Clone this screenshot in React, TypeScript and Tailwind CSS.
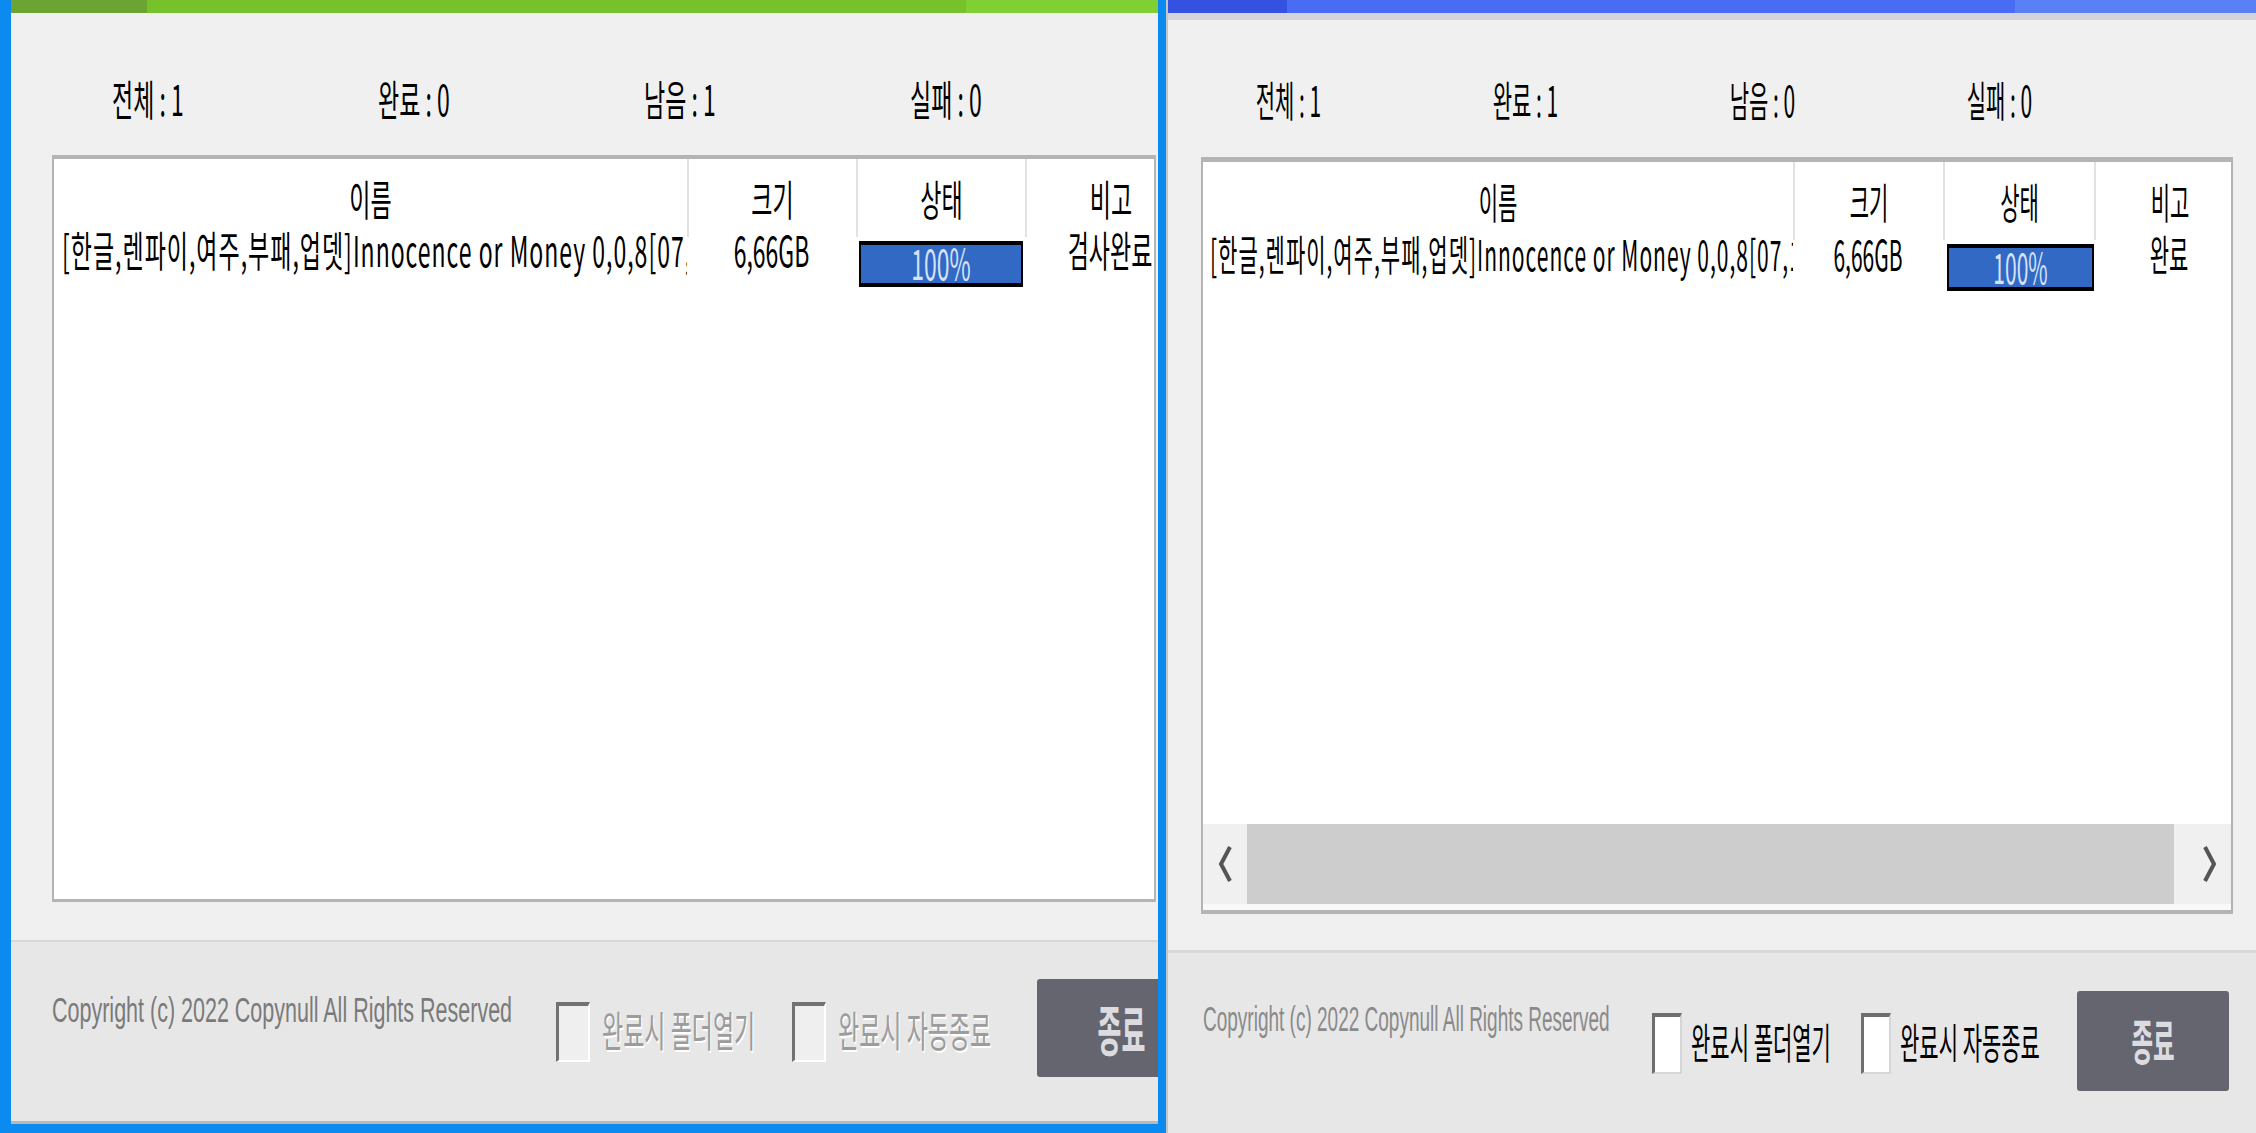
import React from "react";

const NAME = "[한글,렌파이,여주,부패,업뎃]Innocence or Money 0,0,8[07,18],";

function ArrowL() {
  return (
    <svg width="16" height="36" viewBox="0 0 16 36">
      <polyline points="13,1 4,18 13,35" fill="none" stroke="#555555" strokeWidth="4" />
    </svg>
  );
}
function ArrowR() {
  return (
    <svg width="16" height="36" viewBox="0 0 16 36">
      <polyline points="3,1 12,18 3,35" fill="none" stroke="#555555" strokeWidth="4" />
    </svg>
  );
}

function LeftWindow() {
  const t = "inline-block whitespace-pre leading-none text-[23px] scale-y-[1.85]";
  return (
    <div className="flex h-full w-[1166px] shrink-0 flex-col bg-[#0b8bef] pb-[9px] pl-[11px] pr-[8px]">
      <div className="flex h-full w-full flex-col overflow-hidden border-b-[3px] border-[#b9b9b9]">
        <div className="flex h-[13px] shrink-0">
          <div className="w-[136px] bg-[#6ba432]" />
          <div className="flex-1 bg-[#77c12b]" />
          <div className="w-[192px] bg-[#80cf33]" />
        </div>
        <div className="flex h-[927px] shrink-0 flex-col overflow-hidden bg-[#f0f0f0]">
          <div className="mt-[57px] flex h-[60px] shrink-0 items-center pl-[4px]">
            {["전체 : 1", "완료 : 0", "남음 : 1", "실패 : 0"].map((s) => (
              <div key={s} className="w-[266px] text-center">
                <span className={t}>{s}</span>
              </div>
            ))}
          </div>
          <div className="ml-[41px] mt-[25px] flex h-[747px] w-[1104px] shrink-0 flex-col overflow-hidden border-b-[3px] border-l-2 border-r-2 border-t-4 border-[#b4b4b4] bg-white">
            <div className="flex h-[78px] shrink-0">
              <div className="flex w-[633px] shrink-0 items-center justify-center"><span className={t}>이름</span></div>
              <div className="flex w-[169px] shrink-0 items-center justify-center border-l-2 border-[#e2e2e2]"><span className={t}>크기</span></div>
              <div className="flex w-[169px] shrink-0 items-center justify-center border-l-2 border-[#e2e2e2]"><span className={t}>상태</span></div>
              <div className="flex w-[170px] shrink-0 items-center justify-center border-l-2 border-[#e2e2e2]"><span className={t}>비고</span></div>
            </div>
            <div className="flex shrink-0">
              <div className="flex h-[24px] w-[633px] shrink-0 items-center overflow-x-clip pl-[8px]"><span className={t + " tracking-[1px]"}>{NAME}</span></div>
              <div className="flex h-[24px] w-[169px] shrink-0 items-center justify-center"><span className={t}>6,66GB</span></div>
              <div className="w-[169px] shrink-0">
                <div className="ml-[3px] mt-[4px] flex h-[46px] w-[164px] items-center justify-center border-x-2 border-y-4 border-black bg-[#3269c4]">
                  <span className="-mt-[3px] inline-block scale-y-[1.85] text-[23px] leading-none text-[#d6e2f7]">100%</span>
                </div>
              </div>
              <div className="flex h-[24px] w-[170px] shrink-0 items-center justify-center"><span className={t}>검사완료</span></div>
            </div>
          </div>
        </div>
        <div className="h-[2px] shrink-0 bg-[#d8d8d8]" />
        <div className="flex flex-1 items-center overflow-hidden bg-[#e7e7e7] pl-[41px]">
          <div className="mb-[42px] w-[504px] shrink-0">
            <span className="inline-block scale-y-[1.6] whitespace-nowrap font-['Liberation_Sans',Arial,sans-serif] text-[21.5px] leading-none text-[#7a7a7a]">
              Copyright (c) 2022 Copynull All Rights Reserved
            </span>
          </div>
          <div className="h-[60px] w-[34px] shrink-0 border-b-2 border-l-[3px] border-r-2 border-t-4 border-b-white border-l-[#727272] border-r-white border-t-[#727272] bg-[#efefef]" />
          <div className="w-[202px] shrink-0 pl-[12px]">
            <span className="-mt-[3px] inline-block scale-y-[1.85] whitespace-pre text-[23px] leading-none text-[#9c9c9c] [text-shadow:1px_1px_0_#ffffff]">완료시 폴더열기</span>
          </div>
          <div className="h-[60px] w-[34px] shrink-0 border-b-2 border-l-[3px] border-r-2 border-t-4 border-b-white border-l-[#727272] border-r-white border-t-[#727272] bg-[#efefef]" />
          <div className="w-[211px] shrink-0 pl-[12px]">
            <span className="-mt-[3px] inline-block scale-y-[1.85] whitespace-pre text-[23px] leading-none text-[#9c9c9c] [text-shadow:1px_1px_0_#ffffff]">완료시 자동종료</span>
          </div>
          <div className="mb-[7px] flex h-[98px] w-[169px] shrink-0 items-center justify-center rounded-[3px] bg-[#65656f]">
            <span className="inline-block scale-y-[2.1] text-[26px] font-bold leading-none text-[#dcdce0]">종료</span>
          </div>
        </div>
      </div>
    </div>
  );
}

function RightWindow() {
  const t = "inline-block whitespace-pre leading-none text-[21px] scale-y-[2.0]";
  return (
    <div className="flex h-full w-[1088px] shrink-0 flex-col overflow-hidden">
      <div className="flex h-[13px] shrink-0">
        <div className="w-[119px] bg-[#3551e0]" />
        <div className="flex-1 bg-[#4a6cf5]" />
        <div className="w-[241px] bg-[#5b80f5]" />
      </div>
      <div className="h-[7px] shrink-0 bg-[#d3d4da]" />
      <div className="flex h-[930px] shrink-0 flex-col overflow-hidden bg-[#f0f0f0]">
        <div className="mt-[51px] flex h-[60px] shrink-0 items-center pl-[2px]">
          {["전체 : 1", "완료 : 1", "남음 : 0", "실패 : 0"].map((s) => (
            <div key={s} className="w-[237px] text-center">
              <span className={t}>{s}</span>
            </div>
          ))}
        </div>
        <div className="ml-[33px] mt-[26px] flex h-[757px] w-[1032px] shrink-0 flex-col overflow-hidden border-b-4 border-l-2 border-r-2 border-t-[5px] border-[#b4b4b4] bg-white">
          <div className="flex h-[78px] shrink-0">
            <div className="flex w-[590px] shrink-0 items-center justify-center"><span className={t}>이름</span></div>
            <div className="flex w-[150px] shrink-0 items-center justify-center border-l-2 border-[#e2e2e2]"><span className={t}>크기</span></div>
            <div className="flex w-[151px] shrink-0 items-center justify-center border-l-2 border-[#e2e2e2]"><span className={t}>상태</span></div>
            <div className="flex w-[150px] shrink-0 items-center justify-center border-l-2 border-[#e2e2e2]"><span className={t}>비고</span></div>
          </div>
          <div className="flex shrink-0">
            <div className="flex h-[26px] w-[590px] shrink-0 items-center overflow-x-clip pl-[7px]"><span className={t + " tracking-[1px]"}>{NAME}</span></div>
            <div className="flex h-[26px] w-[150px] shrink-0 items-center justify-center"><span className={t}>6,66GB</span></div>
            <div className="w-[151px] shrink-0">
              <div className="ml-[4px] mt-[4px] flex h-[47px] w-[147px] items-center justify-center border-x-2 border-y-4 border-black bg-[#3269c4]">
                <span className="-mt-[3px] inline-block scale-y-[2.0] text-[21px] leading-none text-[#d6e2f7]">100%</span>
              </div>
            </div>
            <div className="flex h-[26px] w-[150px] shrink-0 items-center justify-center"><span className={t}>완료</span></div>
          </div>
          <div className="flex-1" />
          <div className="flex h-[80px] shrink-0 bg-[#f0f0f0]">
            <div className="flex w-[44px] shrink-0 items-center justify-center"><ArrowL /></div>
            <div className="w-[927px] shrink-0 bg-[#cdcdcd]" />
            <div className="flex flex-1 items-center justify-end pr-[13px]"><ArrowR /></div>
          </div>
          <div className="h-[6px] shrink-0 bg-[#f9f9f9]" />
        </div>
      </div>
      <div className="h-[3px] shrink-0 bg-[#d8d8d8]" />
      <div className="flex flex-1 items-center bg-[#e7e7e7] pl-[35px]">
        <div className="mb-[48px] w-[449px] shrink-0">
          <span className="inline-block scale-y-[1.8] whitespace-nowrap font-['Liberation_Sans',Arial,sans-serif] text-[19px] leading-none text-[#8a8a8a]">
            Copyright (c) 2022 Copynull All Rights Reserved
          </span>
        </div>
        <div className="h-[61px] w-[30px] shrink-0 border-b-2 border-l-[3px] border-r-2 border-t-4 border-b-[#d6d6d6] border-l-[#6e6e6e] border-r-[#d6d6d6] border-t-[#6e6e6e] bg-white" />
        <div className="w-[179px] shrink-0 pl-[9px]">
          <span className={t + " -mt-[3px]"}>완료시 폴더열기</span>
        </div>
        <div className="h-[61px] w-[30px] shrink-0 border-b-2 border-l-[3px] border-r-2 border-t-4 border-b-[#d6d6d6] border-l-[#6e6e6e] border-r-[#d6d6d6] border-t-[#6e6e6e] bg-white" />
        <div className="w-[186px] shrink-0 pl-[9px]">
          <span className={t + " -mt-[3px]"}>완료시 자동종료</span>
        </div>
        <div className="mb-[4px] flex h-[100px] w-[152px] shrink-0 items-center justify-center rounded-[3px] bg-[#65656f]">
          <span className="inline-block scale-y-[2.1] text-[23.5px] font-bold leading-none text-[#dcdce0]">종료</span>
        </div>
      </div>
    </div>
  );
}

export default function App() {
  return (
    <div className="flex h-[1133px] w-[2256px] overflow-hidden bg-[#f0f0f0] font-['Noto_Sans_CJK_KR','Noto_Sans',sans-serif] text-black">
      <LeftWindow />
      <div className="h-full w-[2px] shrink-0 bg-[#c5c5c5]" />
      <RightWindow />
    </div>
  );
}
